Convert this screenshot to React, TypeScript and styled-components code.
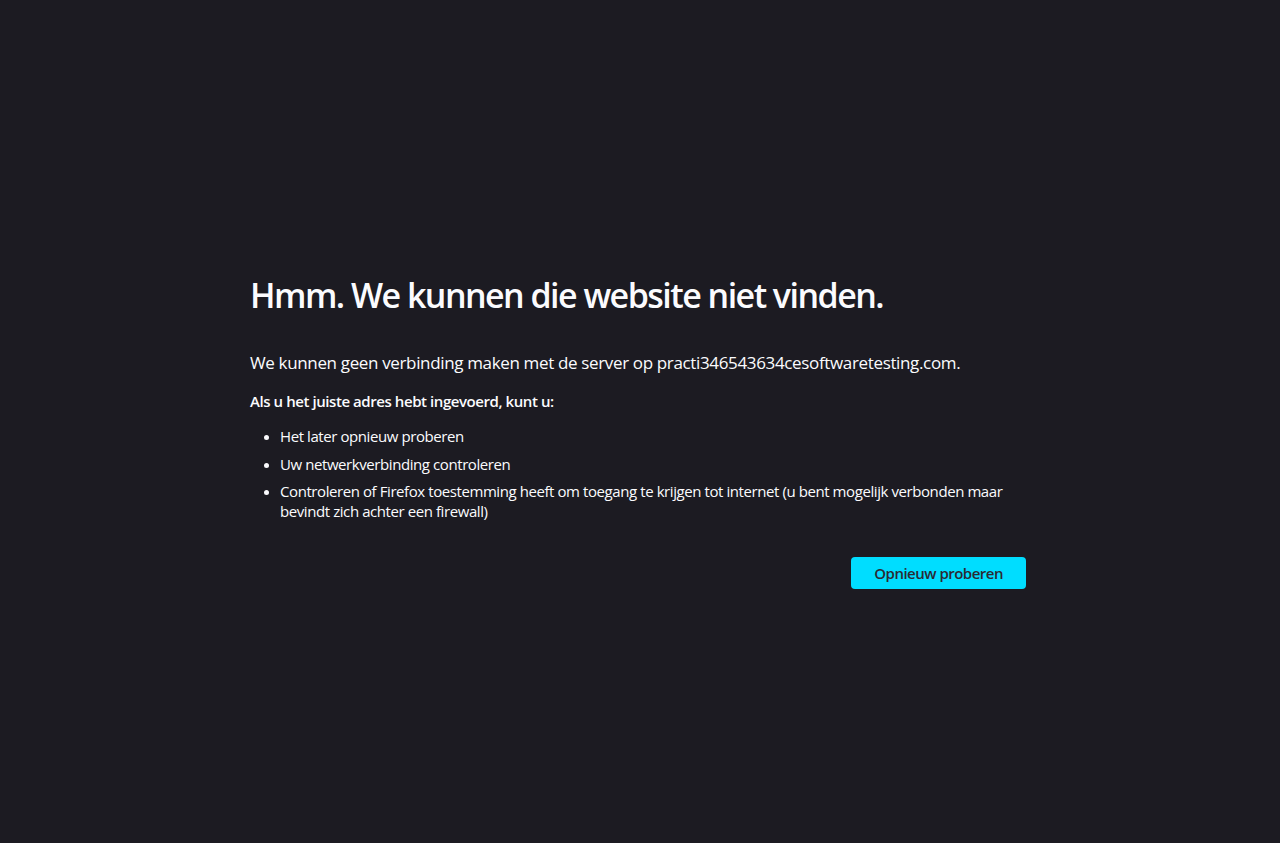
import React from "react";
import styled, { createGlobalStyle } from "styled-components";

const Global = createGlobalStyle`
  html, body { margin: 0; padding: 0; background: #1c1b22; }
  body {
    font-family: "Open Sans", "Noto Sans", sans-serif;
    color: #fbfbfe;
  }
`;

const Page = styled.main`
  min-height: 843px;
  box-sizing: border-box;
  display: flex;
  justify-content: center;
  padding-top: 268px;
`;

const Container = styled.div`
  width: 780px;
  display: flex;
  flex-direction: column;
`;

const Title = styled.h1`
  margin: 0;
  font-size: 34px;
  font-weight: 600;
  line-height: 54px;
  letter-spacing: -1.53px;
`;

const Lead = styled.p`
  margin: 28px 0 0;
  font-size: 17px;
  line-height: 26px;
  letter-spacing: -0.35px;
`;

const Intro = styled.p`
  margin: 14px 0 0;
  font-size: 15px;
  font-weight: 600;
  line-height: 22px;
  letter-spacing: -0.43px;
`;

const List = styled.ul`
  margin: 14px 0 0;
  padding-left: 30px;
  padding-right: 4px;
  font-size: 15px;
  line-height: 20px;
  letter-spacing: -0.42px;
`;

const Item = styled.li`
  margin-bottom: 7.5px;
  &::marker { font-size: 13px; }
`;

const Actions = styled.div`
  display: flex;
  justify-content: flex-end;
  margin-top: 28.5px;
  padding-right: 4px;
`;

const Button = styled.button`
  height: 32px;
  padding: 0 23px;
  border: none;
  border-radius: 4px;
  background: #00ddff;
  color: #2b2a33;
  font-family: inherit;
  font-size: 15px;
  font-weight: 600;
  letter-spacing: -0.5px;
  cursor: pointer;
`;

export default function App() {
  return (
    <>
      <Global />
      <Page>
        <Container>
          <Title>Hmm. We kunnen die website niet vinden.</Title>
          <Lead>
            We kunnen geen verbinding maken met de server op
            practi346543634cesoftwaretesting.com.
          </Lead>
          <Intro>Als u het juiste adres hebt ingevoerd, kunt u:</Intro>
          <List>
            <Item>Het later opnieuw proberen</Item>
            <Item>Uw netwerkverbinding controleren</Item>
            <Item>
              Controleren of Firefox toestemming heeft om toegang te krijgen tot
              internet (u bent mogelijk verbonden maar bevindt zich achter een
              firewall)
            </Item>
          </List>
          <Actions>
            <Button>Opnieuw proberen</Button>
          </Actions>
        </Container>
      </Page>
    </>
  );
}
